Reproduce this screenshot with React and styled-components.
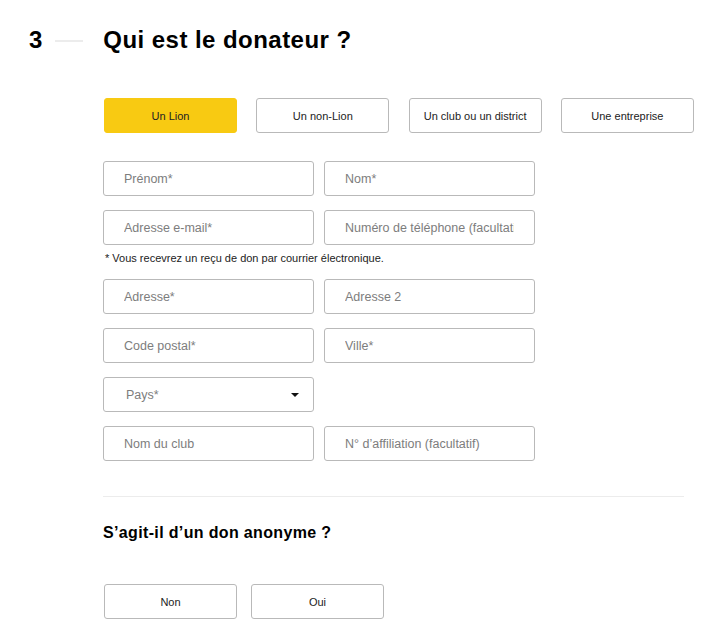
import React from "react";
import styled, { createGlobalStyle } from "styled-components";

const Global = createGlobalStyle`
  html, body { margin: 0; padding: 0; background: #fff; }
  body { font-family: "Liberation Sans", Arial, Helvetica, sans-serif; color: #111; }
  * { box-sizing: border-box; }
`;

const Page = styled.div`
  padding: 24px 0 20px 29px;
`;

const Header = styled.div`
  display: flex;
  align-items: center;
  height: 32px;
`;

const StepNum = styled.span`
  font-size: 24px;
  font-weight: 700;
  line-height: 32px;
  color: #000;
`;

const StepLine = styled.span`
  display: block;
  width: 28px;
  height: 2px;
  background: #ececec;
  margin: 1px 20px 0 13px;
`;

const Title = styled.h1`
  margin: 0;
  font-size: 24px;
  font-weight: 700;
  line-height: 32px;
  letter-spacing: 0.45px;
  color: #000;
`;

const Body = styled.div`
  margin-left: 74px;
  width: 591px;
`;

const ChoiceRow = styled.div`
  display: grid;
  grid-template-columns: repeat(${(p) => p.$cols}, 133px);
  column-gap: ${(p) => p.$gap}px;
  padding-left: 1px;
  margin-top: ${(p) => p.$top}px;
`;

const Choice = styled.button`
  height: 35px;
  border-radius: 3px;
  border: 1px solid ${(p) => (p.$active ? "#f8ca12" : "#b9b9b9")};
  background: ${(p) => (p.$active ? "#f8ca12" : "#fff")};
  font-family: inherit;
  font-size: 11px;
  color: #222;
  padding: 0;
  cursor: pointer;
`;

const FieldGrid = styled.div`
  display: grid;
  grid-template-columns: 211px 211px;
  column-gap: 10px;
  row-gap: 14px;
  margin-top: ${(p) => p.$top}px;
`;

const FieldBox = styled.div`
  position: relative;
  height: 35px;
  border: 1px solid #b9b9b9;
  border-radius: 3px;
  display: flex;
  align-items: center;
  padding: 0 ${(p) => (p.$select ? 36 : 20)}px 0 ${(p) => (p.$select ? 22 : 20)}px;
  font-size: 12.5px;
  color: #7d7d7d;
`;

const Placeholder = styled.span`
  flex: 1;
  min-width: 0;
  white-space: nowrap;
  overflow: hidden;
`;

const Caret = styled.span`
  position: absolute;
  right: 14px;
  top: 15px;
  width: 0;
  height: 0;
  border-left: 4px solid transparent;
  border-right: 4px solid transparent;
  border-top: 4px solid #111;
`;

const Note = styled.p`
  margin: 6px 0 0 2px;
  font-size: 11px;
  line-height: 14px;
  color: #222;
`;

const Divider = styled.hr`
  margin: 35px 0 0 0;
  width: 581px;
  border: 0;
  border-top: 1px solid #ececec;
`;

const SubTitle = styled.h2`
  margin: 26px 0 0 0;
  font-size: 16px;
  line-height: 20px;
  font-weight: 700;
  letter-spacing: 0.35px;
  color: #000;
`;

const Field = ({ children, select }) => (
  <FieldBox $select={select}>
    <Placeholder>{children}</Placeholder>
    {select && <Caret />}
  </FieldBox>
);

export default function App() {
  return (
    <Page>
      <Global />
      <Header>
        <StepNum>3</StepNum>
        <StepLine />
        <Title>Qui est le donateur ?</Title>
      </Header>
      <Body>
        <ChoiceRow $cols={4} $gap={19.3} $top={42}>
          <Choice $active>Un Lion</Choice>
          <Choice>Un non-Lion</Choice>
          <Choice>Un club ou un district</Choice>
          <Choice>Une entreprise</Choice>
        </ChoiceRow>

        <FieldGrid $top={28}>
          <Field>Prénom*</Field>
          <Field>Nom*</Field>
          <Field>Adresse e-mail*</Field>
          <Field>Numéro de téléphone (facultatif)</Field>
        </FieldGrid>
        <Note>* Vous recevrez un reçu de don par courrier électronique.</Note>

        <FieldGrid $top={14}>
          <Field>Adresse*</Field>
          <Field>Adresse 2</Field>
          <Field>Code postal*</Field>
          <Field>Ville*</Field>
          <Field select>Pays*</Field>
          <div />
          <Field>Nom du club</Field>
          <Field>N° d’affiliation (facultatif)</Field>
        </FieldGrid>

        <Divider />
        <SubTitle>S’agit-il d’un don anonyme ?</SubTitle>

        <ChoiceRow $cols={2} $gap={14} $top={41}>
          <Choice>Non</Choice>
          <Choice>Oui</Choice>
        </ChoiceRow>
      </Body>
    </Page>
  );
}
